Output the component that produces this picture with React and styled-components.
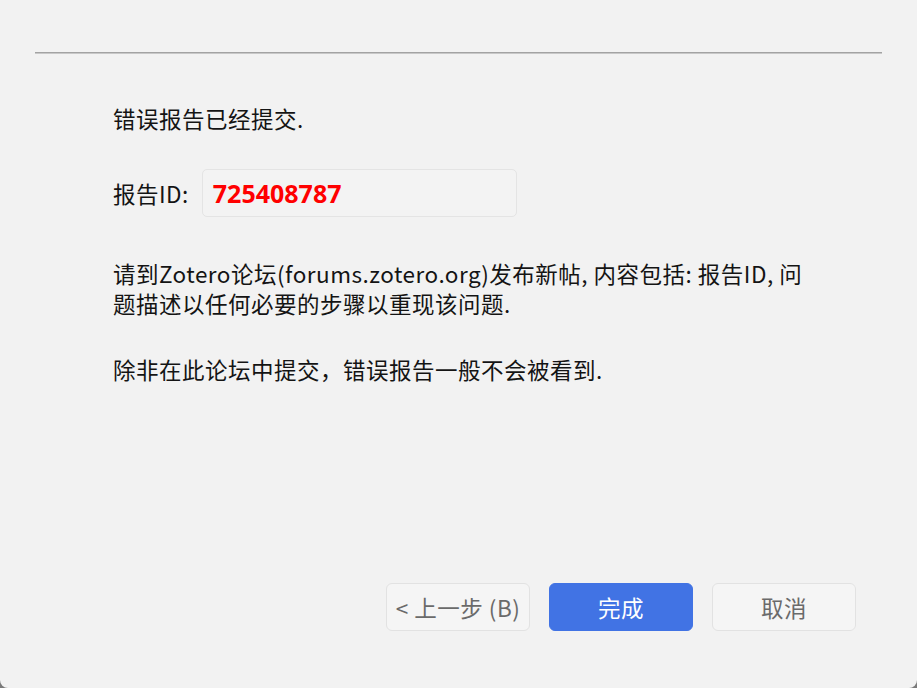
import React from 'react';
import styled, { createGlobalStyle } from 'styled-components';

const GlobalStyle = createGlobalStyle`
  html, body {
    margin: 0;
    padding: 0;
    background: #7a7a7a;
  }
  * {
    box-sizing: border-box;
  }
`;

const Window = styled.div`
  width: 917px;
  height: 688px;
  background: #f2f2f2;
  border-radius: 0 0 8px 8px;
  display: flex;
  flex-direction: column;
  font-family: "Noto Sans CJK SC", "Noto Sans", sans-serif;
  letter-spacing: 0.5px;
  color: #141414;
  overflow: hidden;
`;

const Separator = styled.div`
  margin: 52px 35px 0;
  height: 2px;
  border-top: 1px solid #a3a3a3;
  border-bottom: 1px solid #c8c8c8;
`;

const Content = styled.div`
  flex: 1;
  padding: 49px 0 0 113px;
  display: flex;
  flex-direction: column;
`;

const Text = styled.p`
  margin: ${(p) => p.$top || 0}px 0 0;
  font-size: 22.5px;
  line-height: 30px;
  width: 700px;
`;

const IdRow = styled.div`
  margin-top: 36px;
  display: flex;
  align-items: center;
  gap: 13px;
  font-size: 22.5px;
`;

const IdBox = styled.div`
  width: 315px;
  height: 48px;
  border: 1px solid #e4e4e4;
  border-radius: 5px;
  background: #f3f3f3;
  display: flex;
  align-items: center;
  padding-left: 10px;
  color: #ff0000;
  font-weight: 700;
  font-size: 25px;
  letter-spacing: 0;
  font-family: "Open Sans", "Noto Sans", sans-serif;
`;

const Footer = styled.div`
  display: flex;
  justify-content: flex-end;
  gap: 19px;
  padding: 0 61px 57px 0;
`;

const Button = styled.button`
  width: 144px;
  height: 48px;
  border-radius: 6px;
  font-family: "Noto Sans CJK SC", "Noto Sans", sans-serif;
  font-size: 22.5px;
  letter-spacing: 0.5px;
  border: 1px solid ${(p) => (p.$primary ? '#4173e4' : '#e2e2e2')};
  background: ${(p) => (p.$primary ? '#4173e4' : '#f5f5f5')};
  color: ${(p) => (p.$primary ? '#ffffff' : '#6a6a6a')};
  padding: 0;
  white-space: nowrap;
  cursor: default;
`;

export default function App() {
  return (
    <>
      <GlobalStyle />
      <Window>
        <Separator />
        <Content>
          <Text>错误报告已经提交.</Text>
          <IdRow>
            <span>报告ID:</span>
            <IdBox>725408787</IdBox>
          </IdRow>
          <Text $top={41}>
            请到Zotero论坛(forums.zotero.org)发布新帖, 内容包括: 报告ID, 问题描述以任何必要的步骤以重现该问题.
          </Text>
          <Text $top={36}>除非在此论坛中提交，错误报告一般不会被看到.</Text>
        </Content>
        <Footer>
          <Button>&lt; 上一步 (B)</Button>
          <Button $primary>完成</Button>
          <Button>取消</Button>
        </Footer>
      </Window>
    </>
  );
}
